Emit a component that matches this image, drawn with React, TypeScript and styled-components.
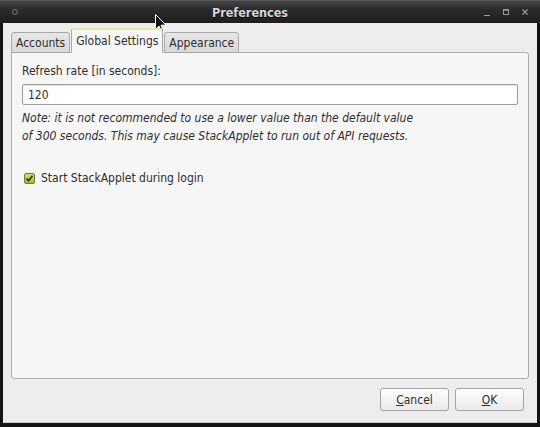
import styled, { createGlobalStyle } from "styled-components";

const GlobalStyle = createGlobalStyle`
  html, body {
    margin: 0;
    padding: 0;
    background: #111;
  }
  body {
    font-family: "DejaVu Sans Condensed", "DejaVu Sans", sans-serif;
    font-size: 12px;
    color: #2e2e2e;
  }
`;

const Window = styled.div`
  position: relative;
  width: 540px;
  height: 427px;
  display: flex;
  flex-direction: column;
  background: #141414;
  overflow: hidden;
`;

const TitleBar = styled.div`
  height: 23px;
  display: grid;
  grid-template-columns: 20px 1fr 60px;
  align-items: center;
  background: linear-gradient(#454545, #2a2a2a 40%, #1f1f1f);
  border-top: 1px solid #5a5a5a;
  box-sizing: border-box;
`;

const MenuDot = styled.span`
  width: 4px;
  height: 4px;
  margin-left: 12px;
  border: 1px solid #777;
  border-radius: 50%;
`;

const Title = styled.div`
  text-align: center;
  font-family: "DejaVu Sans Condensed", "DejaVu Sans", sans-serif;
  font-weight: bold;
  font-size: 12.5px;
  color: #d6d6d6;
  text-shadow: 0 1px 0 #000;
`;

const Controls = styled.div`
  display: flex;
  justify-content: flex-end;
  align-items: center;
  gap: 11px;
  padding-right: 11px;
`;

const Body = styled.div`
  flex: 1;
  margin: 0 3px 4px 3px;
  background: #ededed;
  display: flex;
  flex-direction: column;
  padding: 6px 8px 0 8px;
  border-bottom: 1px solid #d0d0d0;
`;

const TabBar = styled.div`
  display: flex;
  align-items: flex-end;
  height: 24px;
  position: relative;
  z-index: 1;
  margin-bottom: -1px;
`;

const Tab = styled.div<{ $active?: boolean }>`
  box-sizing: border-box;
  height: ${({ $active }) => ($active ? "25px" : "21px")};
  padding: 0 4px;
  margin-right: 1px;
  display: flex;
  align-items: center;
  border: 1px solid #a9a9a9;
  border-bottom: ${({ $active }) => ($active ? "1px solid #f6f6f6" : "1px solid #a9a9a9")};
  border-radius: 3px 3px 0 0;
  background: ${({ $active }) => ($active ? "#f6f6f6" : "linear-gradient(#e6e6e6, #d9d9d9)")};
  color: #2e2e2e;
  border-top: ${({ $active }) => ($active ? "2px solid #dfe9a8" : "1px solid #a9a9a9")};
  padding-top: ${({ $active }) => ($active ? "0" : "1px")};
`;

const Panel = styled.div`
  box-sizing: border-box;
  height: 327px;
  background: #f6f6f6;
  border: 1px solid #aeaeae;
  border-radius: 0 3px 3px 3px;
  padding: 11px 10px 0 10px;
  display: flex;
  flex-direction: column;
`;

const FieldLabel = styled.div`
  line-height: 15px;
  margin-bottom: 5px;
`;

const Input = styled.div`
  box-sizing: border-box;
  height: 21px;
  border: 1px solid #9c9c9c;
  border-radius: 2px;
  background: #fff;
  padding: 0 5px;
  display: flex;
  align-items: center;
  box-shadow: inset 0 1px 1px rgba(0, 0, 0, 0.12);
`;

const Note = styled.p`
  margin: 4px 0 0 0;
  font-style: italic;
  line-height: 18px;
`;

const CheckRow = styled.label`
  display: flex;
  align-items: center;
  gap: 6px;
  margin-top: 26px;
  padding-left: 2px;
`;

const CheckBox = styled.span`
  box-sizing: border-box;
  width: 11px;
  height: 11px;
  border: 1px solid #6f7a2c;
  border-radius: 2px;
  background: linear-gradient(#d2e06a, #a6bb38);
  display: flex;
  align-items: center;
  justify-content: center;
`;

const ButtonRow = styled.div`
  display: flex;
  justify-content: flex-end;
  gap: 6px;
  padding: 9px 5px 0 0;
`;

const Button = styled.button`
  box-sizing: border-box;
  width: 69px;
  height: 23px;
  border: 1px solid #a4a4a4;
  border-radius: 3px;
  background: linear-gradient(#fdfdfd, #e9e9e9);
  font-family: "DejaVu Sans Condensed", "DejaVu Sans", sans-serif;
  font-size: 12px;
  color: #2e2e2e;
  padding: 0;
  u {
    text-decoration: underline;
  }
`;

const Cursor = styled.svg`
  position: absolute;
  left: 155px;
  top: 14px;
`;

export default function App() {
  return (
    <>
      <GlobalStyle />
      <Window>
        <TitleBar>
          <MenuDot />
          <Title>Preferences</Title>
          <Controls>
            <svg width="8" height="8" viewBox="0 0 8 8">
              <path d="M1 7.5h6" stroke="#9a9a9a" strokeWidth="1" />
            </svg>
            <svg width="8" height="8" viewBox="0 0 8 8">
              <rect x="1.5" y="1.5" width="5" height="5" fill="none" stroke="#9a9a9a" strokeWidth="1" />
              <path d="M1.5 2h5" stroke="#9a9a9a" strokeWidth="1.5" />
            </svg>
            <svg width="8" height="8" viewBox="0 0 8 8">
              <path d="M1.5 1.5l5 5M6.5 1.5l-5 5" stroke="#9a9a9a" strokeWidth="1.2" />
            </svg>
          </Controls>
        </TitleBar>
        <Body>
          <TabBar>
            <Tab>Accounts</Tab>
            <Tab $active>Global Settings</Tab>
            <Tab>Appearance</Tab>
          </TabBar>
          <Panel>
            <FieldLabel>Refresh rate [in seconds]:</FieldLabel>
            <Input>120</Input>
            <Note>
              Note: it is not recommended to use a lower value than the default value
              <br />
              of 300 seconds. This may cause StackApplet to run out of API requests.
            </Note>
            <CheckRow>
              <CheckBox>
                <svg width="9" height="9" viewBox="0 0 9 9">
                  <path d="M1.5 4.5l2 2.2L7.5 1.8" fill="none" stroke="#27300d" strokeWidth="1.6" />
                </svg>
              </CheckBox>
              Start StackApplet during login
            </CheckRow>
          </Panel>
          <ButtonRow>
            <Button>
              <u>C</u>ancel
            </Button>
            <Button>
              <u>O</u>K
            </Button>
          </ButtonRow>
        </Body>
        <Cursor width="12" height="19" viewBox="0 0 12 19">
          <path d="M0.5 0.5v15l3.5-3.5 2.5 5.5 2-1-2.5-5.3h5z" fill="#111" stroke="#fff" strokeWidth="1" />
        </Cursor>
      </Window>
    </>
  );
}
